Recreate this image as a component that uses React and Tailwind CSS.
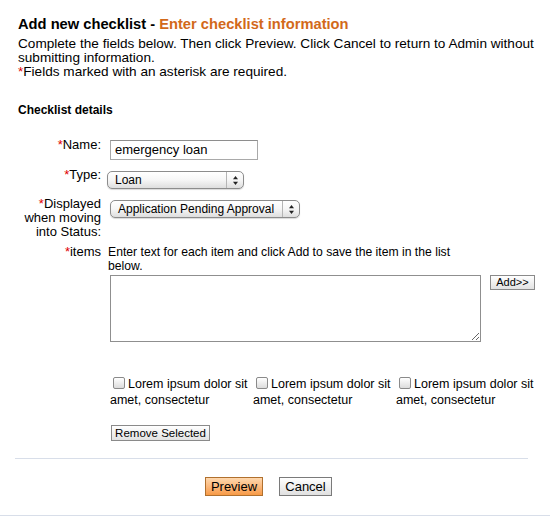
import React from "react";

function Req() {
  return <span className="text-[#e00000]">*</span>;
}

function Arrows() {
  return (
    <div className="flex h-full w-[17px] items-center justify-center border-l border-[#b5b5b5]">
      <svg width="7" height="11" viewBox="0 0 7 11">
        <path d="M3.5 1 L6 4.2 L1 4.2 Z" fill="#222" />
        <path d="M3.5 10 L6 6.8 L1 6.8 Z" fill="#222" />
      </svg>
    </div>
  );
}

function FakeSelect({ value, width }) {
  return (
    <div
      className={`flex h-[18px] items-center rounded-[5px] border border-[#8c8c8c] bg-gradient-to-b from-white via-[#f6f6f6] to-[#dedede] shadow-[0_1px_1px_rgba(0,0,0,0.15)] ${width}`}
    >
      <div className="flex-1 whitespace-nowrap pl-[7px] text-[12px] leading-[16px] text-black">{value}</div>
      <Arrows />
    </div>
  );
}

function Check() {
  return (
    <div className="w-[143px] whitespace-nowrap text-[12.5px] leading-[16px]">
      <span className="ml-[3px] mr-[3px] inline-block h-[12px] w-[12px] rounded-[2px] border border-[#8a8a8a] bg-gradient-to-b from-white to-[#dcdcdc] align-[-1px]" />
      Lorem ipsum dolor sit
      <br />
      amet, consectetur
    </div>
  );
}

export default function App() {
  return (
    <div
      className="h-[517px] w-[550px] overflow-hidden bg-white text-black"
      style={{ fontFamily: '"Liberation Sans", Arial, Helvetica, sans-serif' }}
    >
      <div className="pl-[18px] pr-[8px] pt-[14px]">
        <h1 className="text-[14.7px] font-bold leading-[20px]">
          Add new checklist - <span className="text-[#d2691a]">Enter checklist information</span>
        </h1>
        <p className="mt-[3px] text-[13.6px] leading-[14px]">
          Complete the fields below. Then click Preview. Click Cancel to return to Admin without
          <br />
          submitting information.
          <br />
          <Req />
          Fields marked with an asterisk are required.
        </p>
        <h2 className="mt-[24px] text-[12px] font-bold leading-[14px]">Checklist details</h2>
      </div>

      <div className="mt-[21px] pl-[18px] text-[13px] leading-[14px]">
        {/* Name */}
        <div className="flex items-start">
          <div className="w-[84px] pr-[1px] text-right">
            <Req />
            Name:
          </div>
          <div className="ml-[8px] mt-[2px] flex h-[20px] w-[148px] items-center border border-[#a9a9a9] border-t-[#8e8e8e] px-[4px] text-[13px]">
            emergency loan
          </div>
        </div>

        {/* Type */}
        <div className="mt-[8px] flex items-start">
          <div className="w-[84px] pr-[1px] text-right">
            <Req />
            Type:
          </div>
          <div className="ml-[5px] mt-[3px]">
            <FakeSelect value="Loan" width="w-[137px]" />
          </div>
        </div>

        {/* Status */}
        <div className="mt-[8px] flex items-start">
          <div className="w-[84px] whitespace-nowrap pr-[1px] text-right">
            <Req />
            Displayed
            <br />
            when moving
            <br />
            into Status:
          </div>
          <div className="ml-[8px] mt-[3px]">
            <FakeSelect value="Application Pending Approval" width="w-[190px]" />
          </div>
        </div>

        {/* items */}
        <div className="mt-[6px] flex items-start">
          <div className="w-[84px] pr-[1px] text-right">
            <Req />
            items
          </div>
          <div className="ml-[6px] w-[440px]">
            <div className="whitespace-nowrap text-[12.2px]">
              Enter text for each item and click Add to save the item in the list
              <br />
              below.
            </div>
            <div className="mt-[2px] flex items-start">
              <textarea className="ml-[2px] h-[67px] w-[371px] resize-y border border-[#8f8f8f] bg-white outline-none" />
              <button className="ml-[9px] flex h-[15px] w-[45px] items-center justify-center border border-[#8a8a8a] bg-gradient-to-b from-white to-[#e2e2e2] text-[11px] leading-[13px] text-black">
                Add&gt;&gt;
              </button>
            </div>
          </div>
        </div>

        {/* checkboxes */}
        <div className="ml-[92px] mt-[34px] flex">
          <Check />
          <Check />
          <Check />
        </div>

        <button className="ml-[93px] mt-[17px] flex h-[16px] w-[99px] items-center justify-center border border-[#8a8a8a] bg-gradient-to-b from-white to-[#e2e2e2] text-[11.5px] leading-[14px] text-black">
          Remove Selected
        </button>
      </div>

      <div className="ml-[15px] mt-[17px] h-px w-[513px] bg-[#d8dee9]" />

      <div className="ml-[15px] mt-[18px] flex w-[513px] justify-center gap-[16px] pr-[6px]">
        <button className="flex h-[19px] w-[58px] items-center justify-center border border-[#b0702e] bg-gradient-to-b from-[#fed7ad] to-[#f79a45] text-[13px] leading-[15px] text-black">
          Preview
        </button>
        <button className="flex h-[19px] w-[53px] items-center justify-center border border-[#7a7a7a] bg-gradient-to-b from-white to-[#e0e0e0] text-[13px] leading-[15px] text-black">
          Cancel
        </button>
      </div>

      <div className="mt-[19px] h-px w-[550px] bg-[#d8dee9]" />
    </div>
  );
}
